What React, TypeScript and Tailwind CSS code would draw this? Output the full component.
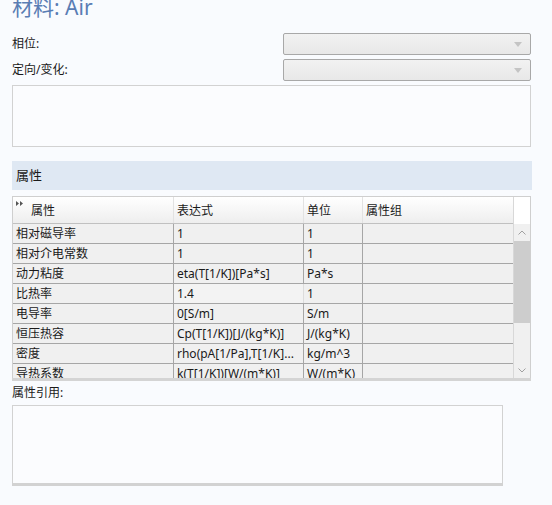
import React from 'react';

const rows: [string, string, string][] = [
  ['相对磁导率', '1', '1'],
  ['相对介电常数', '1', '1'],
  ['动力粘度', 'eta(T[1/K])[Pa*s]', 'Pa*s'],
  ['比热率', '1.4', '1'],
  ['电导率', '0[S/m]', 'S/m'],
  ['恒压热容', 'Cp(T[1/K])[J/(kg*K)]', 'J/(kg*K)'],
  ['密度', 'rho(pA[1/Pa],T[1/K]...', 'kg/m^3'],
  ['导热系数', 'k(T[1/K])[W/(m*K)]', 'W/(m*K)'],
];

const Select: React.FC = () => (
  <div className="w-[248px] h-[22px] rounded-[2px] border border-[#a8a8a8] bg-gradient-to-b from-[#f2f2f2] to-[#e8e8e8] flex items-center justify-end pr-[8px]">
    <svg width="8" height="5" viewBox="0 0 8 5">
      <path d="M0 0 L8 0 L4 5 Z" fill="#c4c4c4" />
    </svg>
  </div>
);

export default function App() {
  return (
    <div
      className="w-[552px] h-[505px] overflow-hidden bg-[#f9fbfe] text-[12px] text-[#1a1a1a]"
      style={{ fontFamily: '"Noto Sans", "Noto Sans CJK SC", sans-serif' }}
    >
      <div className="px-[12px]">
        <div className="text-[21px] leading-[21px] text-[#5a7db4] mt-[-3px] h-[30px]">材料: Air</div>

        <div className="w-[519px] flex items-center justify-between h-[22px] mt-[6px]">
          <span>相位:</span>
          <Select />
        </div>
        <div className="w-[519px] flex items-center justify-between h-[22px] mt-[4px]">
          <span>定向/变化:</span>
          <Select />
        </div>

        <div className="mt-[4px] w-[519px] h-[62px] border border-[#d2d2d2] bg-[#fbfcfe]" />

        <div className="mt-[14px] w-[520px] h-[29px] bg-[#dfe8f3] flex items-center px-[4px] text-[13px]">属性</div>

        <div className="mt-[6px] w-[519px] border border-[#cfcfcf] border-b-0 flex">
          <div className="w-[500px]">
            <div className="flex h-[27px] bg-gradient-to-b from-[#ffffff] to-[#eeeeee] border-b border-[#c0c0c0]">
              <div className="w-[161px] relative flex items-end pb-[3px] pl-[18px] border-r border-[#e2e2e2]">
                <svg className="absolute left-[3px] top-[4px]" width="8" height="5" viewBox="0 0 8 5">
                  <path d="M0 0 L3 2.5 L0 5 Z M4 0 L7 2.5 L4 5 Z" fill="#555" />
                </svg>
                属性
              </div>
              <div className="w-[130px] flex items-end pb-[3px] pl-[3px] border-r border-[#e2e2e2]">表达式</div>
              <div className="w-[59px] flex items-end pb-[3px] pl-[3px] border-r border-[#e2e2e2]">单位</div>
              <div className="flex-1 flex items-end pb-[3px] pl-[3px]">属性组</div>
            </div>
            <div className="h-[154px] overflow-hidden">
              {rows.map(([a, b, c], i) => (
                <div key={i} className="flex h-[20px] bg-[#f0f0f0] border-b border-[#a6a6a6]">
                  <div className="w-[161px] pl-[3px] flex items-center border-r border-[#a6a6a6] whitespace-nowrap overflow-hidden">{a}</div>
                  <div className={`w-[130px] pl-[3px] flex items-center border-r whitespace-nowrap overflow-hidden ${i === 3 ? 'border-[#dcdcdc] bg-[#f3f3f3]' : 'border-[#a6a6a6]'}`}>{b}</div>
                  <div className="w-[59px] pl-[3px] flex items-center border-r border-[#a6a6a6] whitespace-nowrap overflow-hidden">{c}</div>
                  <div className="flex-1" />
                </div>
              ))}
            </div>
          </div>
          <div className="flex-1 flex flex-col bg-[#f0f0f0] border-l border-[#d8d8d8]">
            <div className="h-[27px] bg-[#ffffff]" />
            <div className="h-[17px] flex items-center justify-center">
              <svg width="8" height="5" viewBox="0 0 8 5">
                <path d="M0.5 4.5 L4 1 L7.5 4.5" fill="none" stroke="#a0a0a0" strokeWidth="1" />
              </svg>
            </div>
            <div className="h-[82px] bg-[#cdcdcd]" />
            <div className="flex-1 flex items-end justify-center pb-[5px]">
              <svg width="8" height="5" viewBox="0 0 8 5">
                <path d="M0.5 0.5 L4 4 L7.5 0.5" fill="none" stroke="#a0a0a0" strokeWidth="1" />
              </svg>
            </div>
          </div>
        </div>
        <div className="w-[519px] h-[3px] bg-[#d4d4d4]" />

        <div className="mt-[3px] h-[17px] flex items-center">属性引用:</div>
        <div className="mt-[4px] w-[491px] h-[81px] border border-[#d2d2d2] border-b-[3px] border-b-[#d2d2d2] bg-[#fbfcfe]" />
      </div>
    </div>
  );
}
